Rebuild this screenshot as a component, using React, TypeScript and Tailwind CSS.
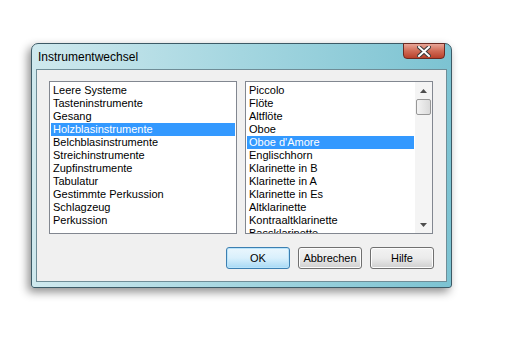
import React from "react";

const groups = [
  "Leere Systeme",
  "Tasteninstrumente",
  "Gesang",
  "Holzblasinstrumente",
  "Belchblasinstrumente",
  "Streichinstrumente",
  "Zupfinstrumente",
  "Tabulatur",
  "Gestimmte Perkussion",
  "Schlagzeug",
  "Perkussion",
];

const instruments = [
  "Piccolo",
  "Flöte",
  "Altflöte",
  "Oboe",
  "Oboe d'Amore",
  "Englischhorn",
  "Klarinette in B",
  "Klarinette in A",
  "Klarinette in Es",
  "Altklarinette",
  "Kontraaltklarinette",
  "Bassklarinette",
];

function ListItem({ label, selected }: { label: string; selected?: boolean }) {
  return (
    <div
      className={`h-[13px] leading-[13px] pl-[2px] whitespace-nowrap ${
        selected ? "bg-[#3399ff] text-white" : "text-black"
      }`}
    >
      {label}
    </div>
  );
}

function Button({ label, primary }: { label: string; primary?: boolean }) {
  return (
    <button
      className={`w-[64px] h-[22px] rounded-[3px] border text-[11px] text-black flex items-center justify-center ${
        primary
          ? "border-[#3c7fb1] bg-gradient-to-b from-[#eaf6fd] via-[#d9f0fc] to-[#a7d9f5] shadow-[inset_0_0_0_1px_#b9e4fb]"
          : "border-[#707070] bg-gradient-to-b from-[#f2f2f2] via-[#ebebeb] to-[#cfcfcf] shadow-[inset_0_0_0_1px_#fcfcfc]"
      }`}
    >
      {label}
    </button>
  );
}

export default function App() {
  return (
    <div
      className="w-[515px] h-[343px] bg-white pl-[31px] pt-[43px]"
      style={{ fontFamily: '"Liberation Sans", Arial, sans-serif' }}
    >
      {/* Window */}
      <div className="w-[421px] h-[245px] rounded-t-[7px] rounded-b-[3px] border border-[#3c5a66] bg-gradient-to-r from-[#cfe9ee] via-[#a4d6e0] to-[#7cc3d2] shadow-[-3px_4px_10px_rgba(0,0,0,0.45)] flex flex-col">
        {/* Title bar */}
        <div className="h-[25px] flex items-start justify-between pl-[6px] pr-[6px]">
          <span className="mt-[4px] text-[12px] text-black">Instrumentwechsel</span>
          <div className="w-[42px] h-[16px] -mt-[1px] rounded-b-[4px] border border-[#6b2a22] bg-gradient-to-b from-[#e7a597] via-[#d06a55] to-[#b8402a] flex items-center justify-center">
            <svg width="14" height="11" viewBox="0 0 14 11">
              <path
                d="M2 1 L12 10 M12 1 L2 10"
                stroke="#3a3a3a"
                strokeWidth="4"
                strokeLinecap="square"
              />
              <path
                d="M2 1 L12 10 M12 1 L2 10"
                stroke="#ffffff"
                strokeWidth="2"
                strokeLinecap="square"
              />
            </svg>
          </div>
        </div>

        {/* Client area */}
        <div className="mx-[4px] mb-[5px] flex-1 border border-[#6f8d97] bg-[#f0f0f0] flex flex-col px-[12px] pt-[11px] text-[11px]">
          <div className="flex gap-[8px]">
            <div className="w-[188px] h-[153px] border border-[#828790] bg-white px-[1px] pt-[2px] overflow-hidden">
              {groups.map((g) => (
                <ListItem key={g} label={g} selected={g === "Holzblasinstrumente"} />
              ))}
            </div>
            <div className="w-[188px] h-[153px] border border-[#828790] bg-white flex overflow-hidden">
              <div className="flex-1 px-[1px] pt-[2px] overflow-hidden">
                {instruments.map((i) => (
                  <ListItem key={i} label={i} selected={i === "Oboe d'Amore"} />
                ))}
              </div>
              {/* Scrollbar */}
              <div className="w-[17px] bg-[#f4f4f4] flex flex-col items-center">
                <div className="h-[17px] flex items-center justify-center">
                  <svg width="7" height="4" viewBox="0 0 7 4">
                    <path d="M3.5 0 L7 4 L0 4 Z" fill="#4d4d4d" />
                  </svg>
                </div>
                <div className="w-[15px] h-[16px] rounded-[2px] border border-[#979797] bg-gradient-to-r from-[#f3f3f3] to-[#dadada]" />
                <div className="flex-1" />
                <div className="h-[17px] flex items-center justify-center">
                  <svg width="7" height="4" viewBox="0 0 7 4">
                    <path d="M0 0 L7 0 L3.5 4 Z" fill="#4d4d4d" />
                  </svg>
                </div>
              </div>
            </div>
          </div>

          <div className="flex justify-end gap-[8px] mt-[13px]">
            <Button label="OK" primary />
            <Button label="Abbrechen" />
            <Button label="Hilfe" />
          </div>
        </div>
      </div>
    </div>
  );
}
